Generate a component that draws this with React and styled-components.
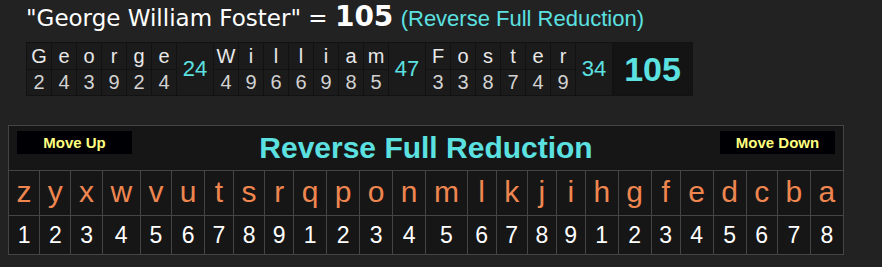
import React from "react";
import styled, { createGlobalStyle } from "styled-components";

const GlobalStyle = createGlobalStyle`
  body {
    margin: 0;
    background: #222222;
    font-family: "Liberation Sans", Arial, sans-serif;
  }
`;

const CYAN = "#5ce1e1";

// reverse full reduction: z=1 ... a=26, reduced to one digit
const reduce = (ch) => {
  const n = 26 - (ch.toLowerCase().charCodeAt(0) - 97);
  return ((n - 1) % 9) + 1;
};

const words = ["George", "William", "Foster"].map((word) => {
  const values = word.split("").map(reduce);
  return { word, values, sum: values.reduce((a, b) => a + b, 0) };
});
const total = words.reduce((a, w) => a + w.sum, 0);

const alphabet = "zyxwvutsrqponmlkjihgfedcba".split("");

const Page = styled.main`
  padding: 0 0 0 8px;
`;

const Top = styled.section`
  padding-left: 18px;
`;

const Title = styled.h1`
  margin: 0;
  font-weight: normal;
  font-size: 23px;
  line-height: 34px;
  font-family: "DejaVu Sans", Verdana, sans-serif;
  color: #ffffff;
`;

const TitleTotal = styled.span`
  font-weight: bold;
  font-size: 28px;
`;

const Cipher = styled.span`
  font-family: "Liberation Sans", Arial, sans-serif;
  font-size: 22px;
  color: ${CYAN};
`;

const WordTable = styled.table`
  margin-top: 6px;
  border-collapse: collapse;
  background: #1b1b1b;
  td {
    border: 1px solid #121212;
    padding: 0;
    text-align: center;
  }
`;

const LetterCell = styled.td`
  width: 24px;
  height: 26px;
  font-size: 20px;
  line-height: 26px;
  color: #e8e8e8;
`;

const DigitCell = styled.td`
  width: 24px;
  height: 25px;
  font-size: 20px;
  line-height: 25px;
  color: #d2d2d2;
`;

const SumCell = styled.td`
  width: 36px;
  font-size: 22px;
  color: ${CYAN};
  vertical-align: middle;
`;

const TotalCell = styled.td`
  width: 79px;
  background: #141414;
  font-size: 34px;
  font-weight: bold;
  color: ${CYAN};
`;

const Chart = styled.table`
  margin-top: 29px;
  width: 836px;
  border-collapse: collapse;
  background: #161616;
  td {
    border: 1px solid #454545;
    text-align: center;
  }
`;

const HeaderCell = styled.td`
  padding: 4px 8px;
`;

const HeaderBar = styled.div`
  display: flex;
  justify-content: space-between;
  align-items: flex-start;
`;

const MoveButton = styled.button`
  margin-top: 1px;
  width: 115px;
  height: 23px;
  padding: 0;
  border: none;
  background: #000004;
  color: #ffff80;
  font-family: "Liberation Sans", Arial, sans-serif;
  font-weight: bold;
  font-size: 15px;
`;

const ChartTitle = styled.h2`
  margin: 0;
  font-size: 30px;
  line-height: 36px;
  font-weight: bold;
  color: ${CYAN};
`;

const AlphaCell = styled.td`
  height: 42px;
  padding: 0 7px 2px;
  font-size: 30px;
  line-height: 40px;
  color: #ef8650;
`;

const ValueCell = styled.td`
  height: 38px;
  padding: 0 7px;
  font-size: 23px;
  line-height: 38px;
  color: #ffffff;
`;

const App = () => {
  return (
    <Page>
      <GlobalStyle />
      <Top>
        <Title>
          "George William Foster" = <TitleTotal>{total}</TitleTotal>{" "}
          <Cipher>(Reverse Full Reduction)</Cipher>
        </Title>
        <WordTable>
          <tbody>
            <tr>
              {words.map((w) => (
                <React.Fragment key={w.word}>
                  {w.word.split("").map((ch, i) => (
                    <LetterCell key={i}>{ch}</LetterCell>
                  ))}
                  <SumCell rowSpan={2}>{w.sum}</SumCell>
                </React.Fragment>
              ))}
              <TotalCell rowSpan={2}>{total}</TotalCell>
            </tr>
            <tr>
              {words.map((w) =>
                w.values.map((v, i) => (
                  <DigitCell key={w.word + i}>{v}</DigitCell>
                ))
              )}
            </tr>
          </tbody>
        </WordTable>
      </Top>
      <Chart>
        <tbody>
          <tr>
            <HeaderCell colSpan={26}>
              <HeaderBar>
                <MoveButton>Move Up</MoveButton>
                <ChartTitle>Reverse Full Reduction</ChartTitle>
                <MoveButton>Move Down</MoveButton>
              </HeaderBar>
            </HeaderCell>
          </tr>
          <tr>
            {alphabet.map((ch) => (
              <AlphaCell key={ch}>{ch}</AlphaCell>
            ))}
          </tr>
          <tr>
            {alphabet.map((ch) => (
              <ValueCell key={ch}>{reduce(ch)}</ValueCell>
            ))}
          </tr>
        </tbody>
      </Chart>
    </Page>
  );
};

export default App;
